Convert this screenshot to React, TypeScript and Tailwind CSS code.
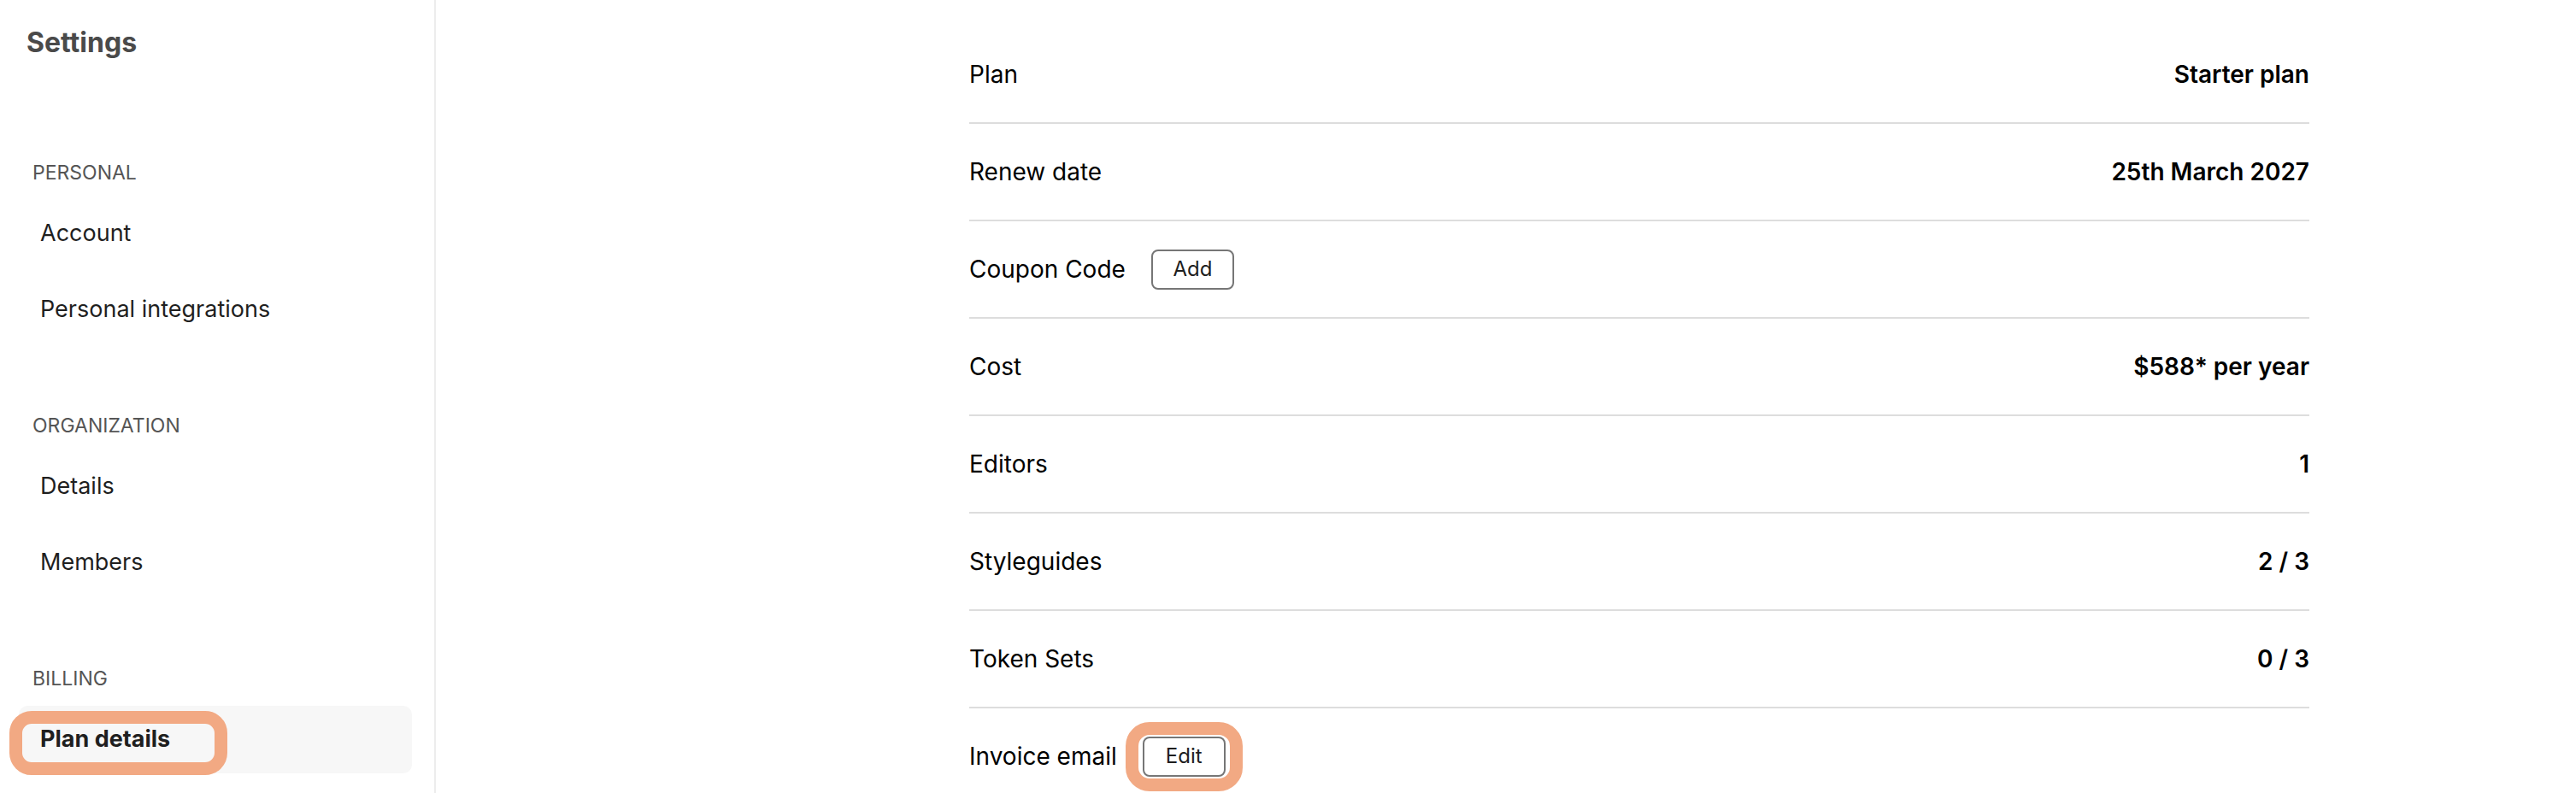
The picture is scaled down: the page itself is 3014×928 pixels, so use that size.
import React from 'react';

interface NavSection {
  title: string;
  items: string[];
}

interface PlanRow {
  label: string;
  value?: string;
  action?: string;
  highlight?: boolean;
}

const sections: NavSection[] = [
  { title: 'PERSONAL', items: ['Account', 'Personal integrations'] },
  { title: 'ORGANIZATION', items: ['Details', 'Members'] },
  { title: 'BILLING', items: ['Plan details'] },
];

const rows: PlanRow[] = [
  { label: 'Plan', value: 'Starter plan' },
  { label: 'Renew date', value: '25th March 2027' },
  { label: 'Coupon Code', action: 'Add' },
  { label: 'Cost', value: '$588* per year' },
  { label: 'Editors', value: '1' },
  { label: 'Styleguides', value: '2 / 3' },
  { label: 'Token Sets', value: '0 / 3' },
  { label: 'Invoice email', action: 'Edit', highlight: true },
];

const active = 'Plan details';

function Sidebar() {
  return (
    <aside className="w-[510px] shrink-0 border-r-2 border-[#ececec] pl-[22px] pr-[26px] pt-[30px]">
      <h1 className="pl-[9px] text-[32px] font-bold leading-[40px] text-[#4a4a4a]">Settings</h1>
      <nav className="mt-[116px] flex flex-col gap-[80px]">
        {sections.map((section) => (
          <div key={section.title}>
            <div className="pl-[16px] text-[23px] leading-[32px] text-[#555555]">{section.title}</div>
            <ul className="mt-[16px] flex flex-col gap-[10px]">
              {section.items.map((item) => {
                const isActive = item === active;
                return (
                  <li
                    key={item}
                    className={
                      isActive
                        ? 'relative flex h-[79px] items-center rounded-[10px] bg-[#f7f7f7] pl-[25px] text-[27px] font-bold text-[#1f1f1f]'
                        : 'flex h-[79px] items-center pl-[25px] text-[27px] text-[#1f1f1f]'
                    }
                  >
                    {item}
                    {isActive && (
                      <span className="pointer-events-none absolute left-[-11px] top-[6px] h-[75px] w-[255px] rounded-[26px] border-[15px] border-[#f2a983]" />
                    )}
                  </li>
                );
              })}
            </ul>
          </div>
        ))}
      </nav>
    </aside>
  );
}

function PlanTable() {
  return (
    <main className="flex-1 pl-[624px] pt-[31px]">
      <div className="w-[1568px]">
        {rows.map((row) => (
          <div
            key={row.label}
            className="flex h-[114px] items-center justify-between border-b-2 border-[#dddddd] text-[28px] text-black"
          >
            <div className="flex items-center gap-[30px]">
              <span>{row.label}</span>
              {row.action && (
                <span className="relative">
                  <button className="flex h-[47px] w-[97px] items-center justify-center rounded-[8px] border-2 border-[#767676] bg-white text-[24px] text-[#1e1e1e]">
                    {row.action}
                  </button>
                  {row.highlight && (
                    <span className="pointer-events-none absolute -inset-x-[20px] -inset-y-[17px] rounded-[28px] border-[15px] border-[#f2a983]" />
                  )}
                </span>
              )}
            </div>
            {row.value && <span className="font-semibold">{row.value}</span>}
          </div>
        ))}
      </div>
    </main>
  );
}

export default function App() {
  return (
    <div className="flex h-[928px] overflow-hidden bg-white font-['Inter',sans-serif]">
      <Sidebar />
      <PlanTable />
    </div>
  );
}
